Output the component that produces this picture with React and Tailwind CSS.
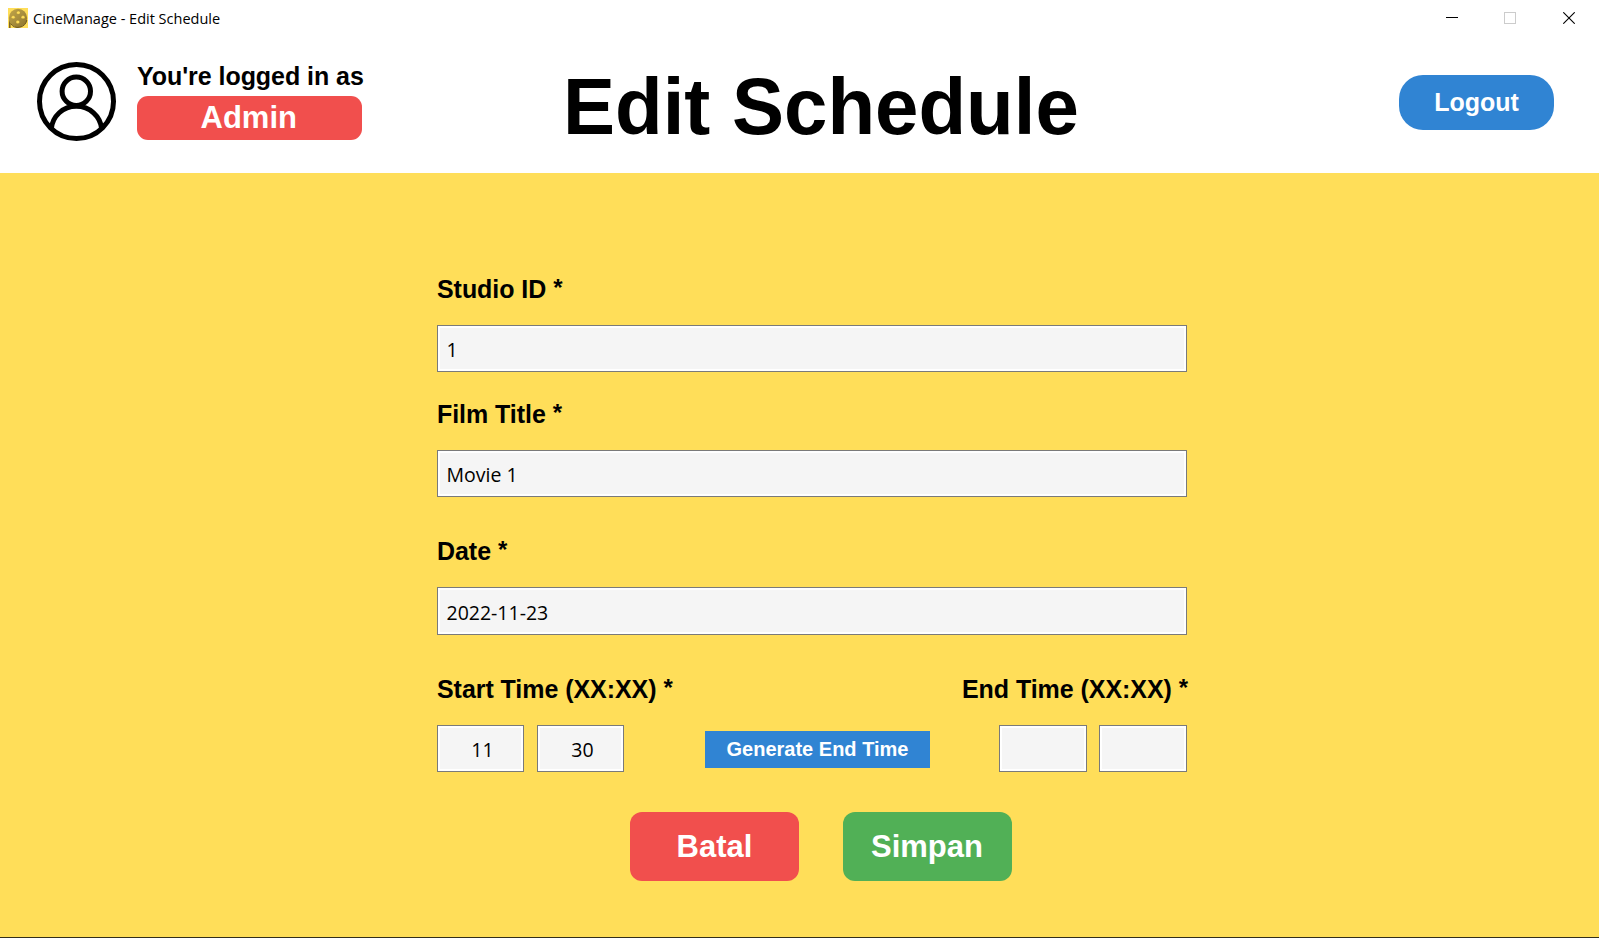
import React from "react";

const arial = "font-['Liberation_Sans',Arial,sans-serif] font-bold whitespace-nowrap origin-bottom";
const segoe = "font-['Open_Sans','Noto_Sans',sans-serif] whitespace-nowrap";

function ReelIcon() {
  return (
    <svg className="size-5" viewBox="0 0 20 20">
      <defs>
        <linearGradient id="reel" x1="0" y1="0" x2="1" y2="1">
          <stop offset="0" stopColor="#c2a548" />
          <stop offset="0.5" stopColor="#a98f3e" />
          <stop offset="1" stopColor="#8b7129" />
        </linearGradient>
      </defs>
      <rect width="20" height="20" fill="#ffde59" />
      <path d="M1 10V20H2.600V16Z" fill="#7d6422" />
      <circle cx="10" cy="10" r="9.200" fill="url(#reel)" />
      <path d="M2.500 15.500A9 9 0 0 0 18.800 12" fill="none" stroke="#6b551c" strokeWidth="1" />
      <g fill="#ffde59" stroke="#8b7129" strokeWidth="0.300">
        <ellipse cx="10.300" cy="4.700" rx="1.900" ry="1.600" />
        <ellipse cx="5.200" cy="9.200" rx="1.900" ry="1.600" />
        <ellipse cx="15" cy="9.200" rx="1.900" ry="1.600" />
        <ellipse cx="9.800" cy="14" rx="1.900" ry="1.700" />
      </g>
    </svg>
  );
}

function UserIcon() {
  return (
    <svg className="w-[79px] h-[79px]" viewBox="0 0 79 79" fill="none" stroke="#000" strokeWidth="5">
      <circle cx="39.500" cy="39.500" r="37" />
      <circle cx="39.300" cy="29.300" r="14.200" />
      <path d="M14.300 67C15.500 54 26 44.300 39.300 44.300S63.500 54 64.700 67" />
    </svg>
  );
}

function TitleBar() {
  return (
    <div className="flex h-9 shrink-0 items-start justify-between pl-2 pr-[24px]">
      <div className="flex pt-2">
        <ReelIcon />
        <span className={`${segoe} ml-[5px] mt-[1px] text-[14.500px] leading-5 text-black`}>
          CineManage - Edit Schedule
        </span>
      </div>
      <div className="flex gap-[46px] pt-3">
        <svg className="h-3 w-3" viewBox="0 0 12 12" shapeRendering="crispEdges"><rect y="5" width="12" height="1" /></svg>
        <svg className="h-3 w-3" viewBox="0 0 12 12" shapeRendering="crispEdges"><rect x="0.5" y="0.5" width="11" height="11" fill="none" stroke="#ccc" /></svg>
        <svg className="ml-[1px] h-3 w-3" viewBox="0 0 12 12"><path d="M0.300 0.300L11.700 11.700M11.700 0.300L0.300 11.700" stroke="#000" strokeWidth="1.100" /></svg>
      </div>
    </div>
  );
}

function Header() {
  return (
    <header className="flex h-[137px] shrink-0 items-start pl-[37px] pr-[45px]">
      <div className="mt-[26px]"><UserIcon /></div>
      <div className="ml-[21px] mt-[25px] w-[224.500px]">
        <div className={`${arial} h-[35px] text-[25px] leading-[30px] tracking-[-0.050px] scale-y-[1.030]`}>You're logged in as</div>
        <div className="flex h-[43.500px] items-center justify-center rounded-[11px] bg-[#f14f4d] pr-[1px] text-white">
          <span className={`${arial} text-[31px] leading-[42px]`}>Admin</span>
        </div>
      </div>
      <h1 className={`${arial} ml-[201.500px] mt-[26.500px] text-[78px] leading-[90px] scale-y-[1.030]`}>Edit Schedule</h1>
      <button className="ml-auto mt-[39px] flex h-[54.500px] w-[155px] items-center justify-center rounded-[24px] bg-[#3084d3] text-white">
        <span className={`${arial} text-[25px] scale-y-[1.030]`}>Logout</span>
      </button>
    </header>
  );
}

const label = `${arial} text-[25px] leading-[28px] tracking-[-0.050px] scale-y-[1.030]`;
const box = `${segoe} flex items-center border border-[#7a7a7a] bg-[#f5f5f5] text-[19.500px] shadow-[inset_0_0_0_2px_#fff] text-black`;

function Star() {
  return <span className="relative -top-[2px] text-[24px]">*</span>;
}

function Field({ title, value, className, inputClass }) {
  return (
    <div className={className}>
      <div className={`${label} h-[30px]`}>{title} <Star /></div>
      <div className={`${box} mt-[20px] w-[750px] pl-[8.500px] ${inputClass}`}>{value}</div>
    </div>
  );
}

export default function App() {
  return (
    <div className="flex h-[938px] w-[1599px] flex-col overflow-hidden bg-white text-black">
      <TitleBar />
      <Header />
      <main className="flex flex-1 flex-col border-b border-[#332f1c] bg-[#ffde59] pl-[437px]">
        <Field className="mt-[102px]" title="Studio ID" value="1" inputClass="h-[47px] pt-[2px]" />
        <Field className="mt-[28px]" title="Film Title" value="Movie 1" inputClass="h-[47px] pt-[2px]" />
        <Field className="mt-[40px]" title="Date" value="2022-11-23" inputClass="h-[48px] pt-[3px]" />
        <div className="mt-[40px] flex h-[30px] w-[751px] justify-between">
          <div className={`${label} h-[30px]`}>Start Time (XX:XX) <Star /></div>
          <div className={`${label} h-[30px]`}>End Time (XX:XX) <Star /></div>
        </div>
        <div className="mt-[20px] flex h-[47px] w-[750px] items-center">
          <div className={`${box} h-[47px] w-[87px] justify-center pl-[4px] pt-[2px]`}>11</div>
          <div className={`${box} ml-[13px] h-[47px] w-[87px] justify-center pl-[4px] pt-[2px]`}>30</div>
          <button className="ml-[81px] mt-[2px] flex h-[37px] w-[225px] items-center justify-center bg-[#3084d3] text-white">
            <span className={`${arial} text-[20px] leading-[35px]`}>Generate End Time</span>
          </button>
          <div className={`${box} ml-[69px] h-[47px] w-[88px]`} />
          <div className={`${box} ml-[12px] h-[47px] w-[88px]`} />
        </div>
        <div className="ml-[193px] mt-[40px] flex gap-[44px] text-white">
          <button className="flex h-[69px] w-[169px] items-center justify-center rounded-[12px] bg-[#f14f4d] pt-[2px]">
            <span className={`${arial} text-[31px]`}>Batal</span>
          </button>
          <button className="flex h-[69px] w-[169px] items-center justify-center rounded-[12px] bg-[#51b056] pr-[1px] pt-[2px]">
            <span className={`${arial} text-[31px]`}>Simpan</span>
          </button>
        </div>
      </main>
    </div>
  );
}
